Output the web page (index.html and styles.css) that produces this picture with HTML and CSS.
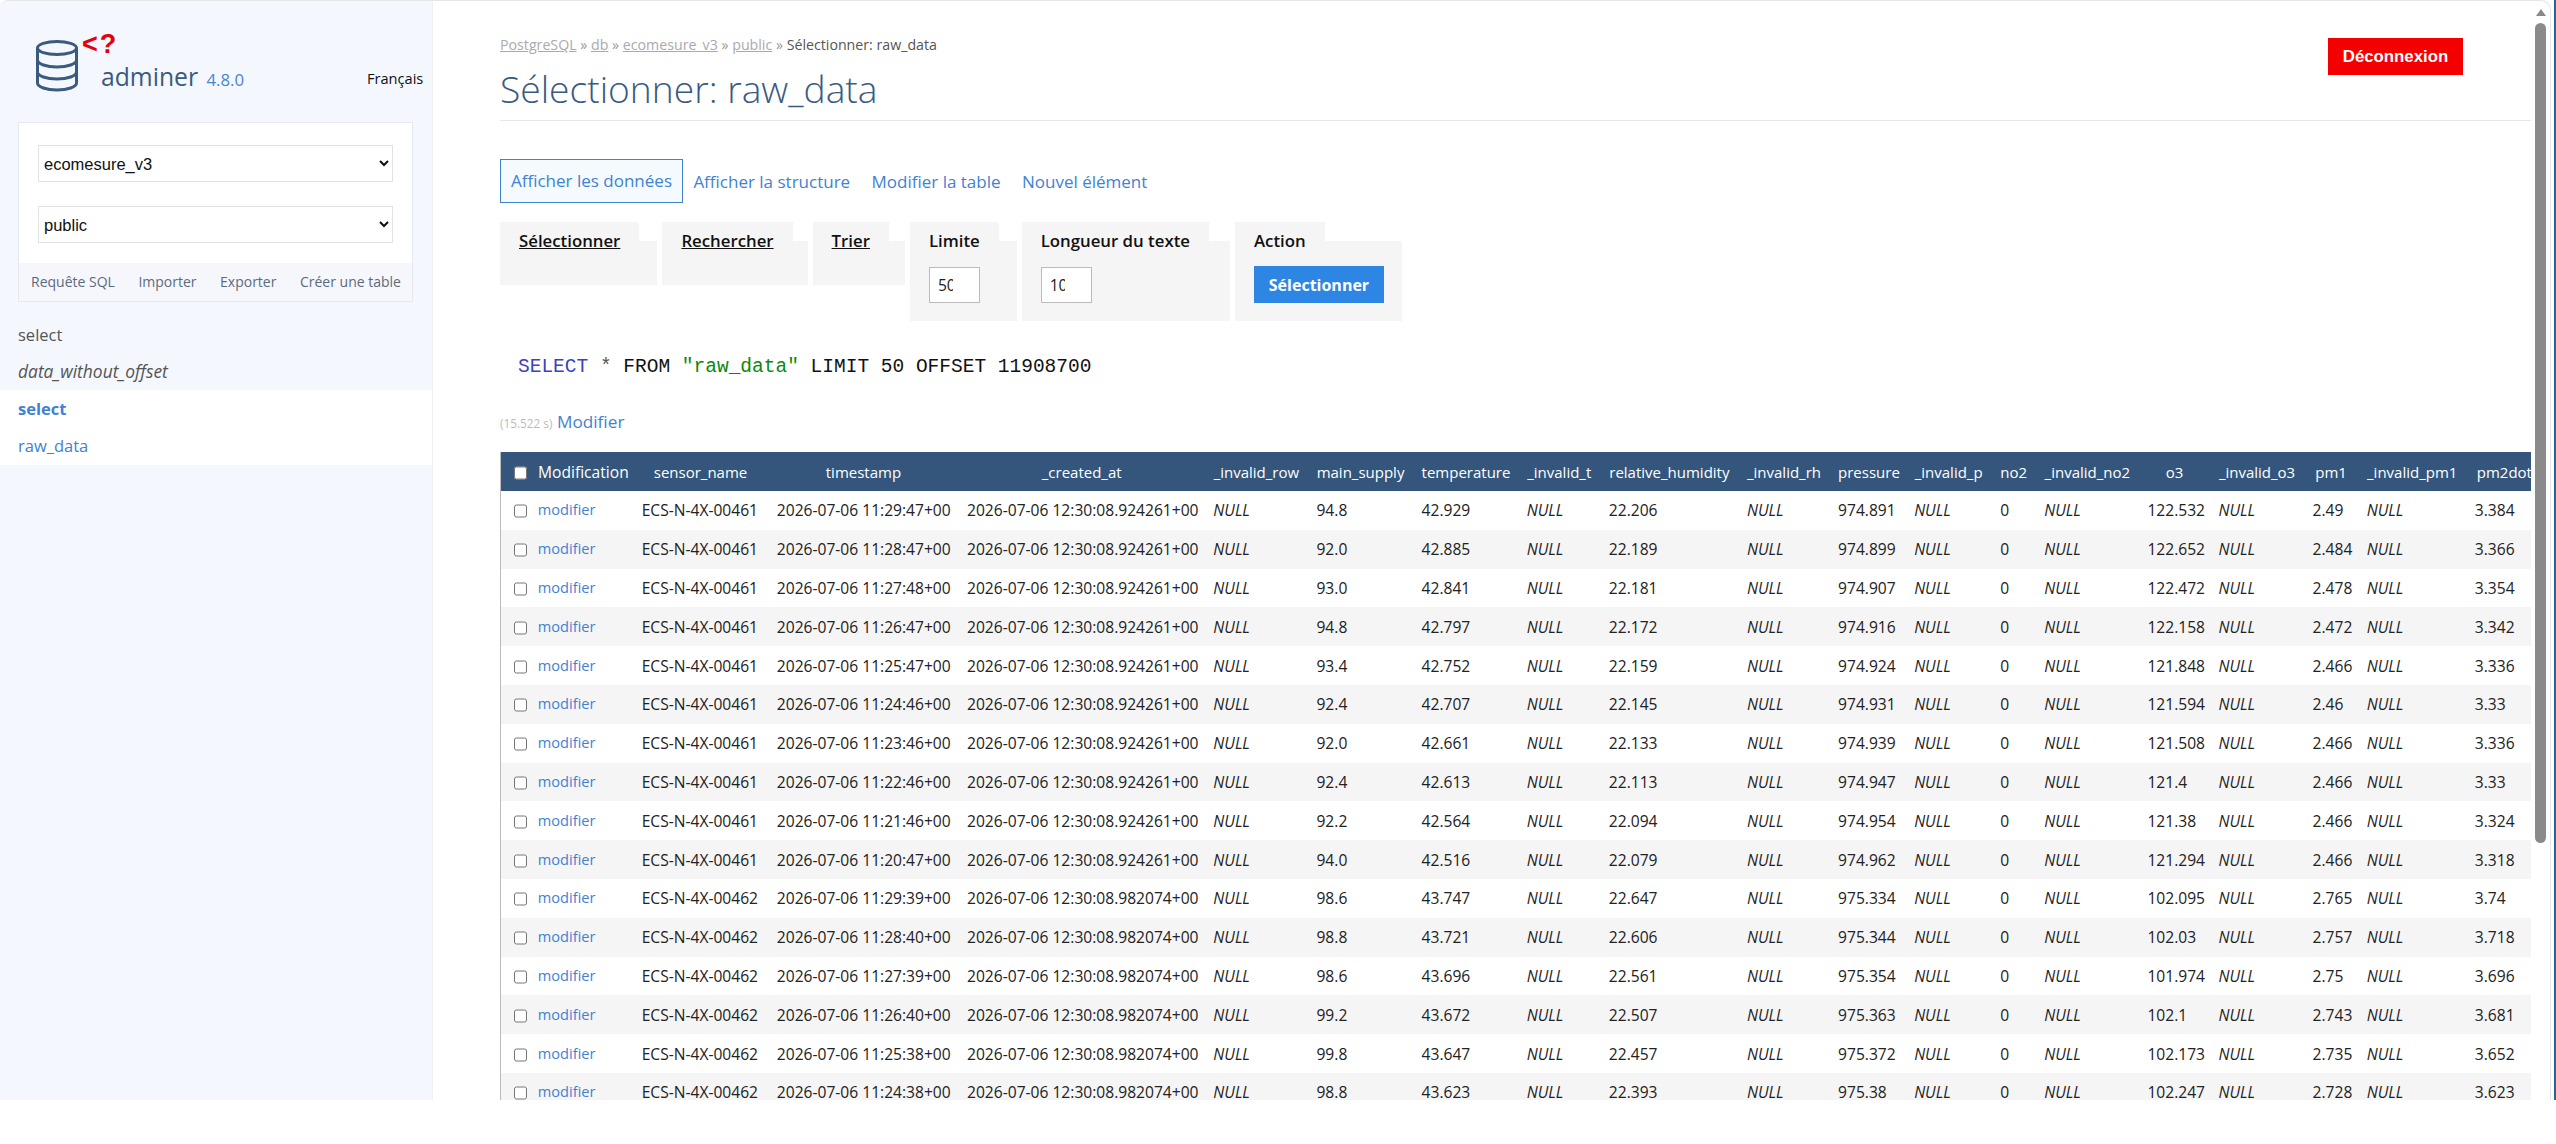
FILE: index.html

```html
<!DOCTYPE html>
<html lang="fr">
<head>
    <meta charset="UTF-8">
    <title>Sélectionner: raw_data - Adminer</title>
    <link rel="stylesheet" href="styles.css">
</head>
<body>
<div class="edge">
<div class="window">
    <aside class="sidebar">
        <div class="brand">
            <svg class="logo" width="84" height="64" viewBox="0 0 84 64">
                <g fill="none" stroke="#3a5a7f" stroke-width="3">
                    <ellipse cx="21" cy="17" rx="19.5" ry="6.5"/>
                    <path d="M1.5 17v35c0 4 9 7 19.5 7s19.5-3 19.5-7V17"/>
                    <path d="M1.5 29c0 4 9 7 19.5 7s19.5-3 19.5-7"/>
                    <path d="M1.5 41c0 4 9 7 19.5 7s19.5-3 19.5-7"/>
                </g>
                <text class="logo-mark" x="46" y="22">&lt;?</text>
            </svg>
            <div class="name">adminer <span class="version">4.8.0</span></div>
            <a class="lang">Français</a>
        </div>
        <div class="db-box">
            <div class="db-selects">
                <select><option>ecomesure_v3</option></select>
                <select><option>public</option></select>
            </div>
            <div class="db-links">
                <a>Requête SQL</a>
                <a>Importer</a>
                <a>Exporter</a>
                <a>Créer une table</a>
            </div>
        </div>
        <ul class="views">
            <li>select</li>
            <li><em>data_without_offset</em></li>
        </ul>
        <ul class="tables">
            <li><b>select</b></li>
            <li>raw_data</li>
        </ul>
    </aside>

    <main class="content">
        <header class="top">
            <div>
                <p class="crumbs"><a>PostgreSQL</a> » <a>db</a> » <a>ecomesure_v3</a> » <a>public</a> » <span>Sélectionner: raw_data</span></p>
                <h1>Sélectionner: raw_data</h1>
            </div>
            <button class="logout">Déconnexion</button>
        </header>

        <nav class="tabs">
            <a class="active">Afficher les données</a>
            <a>Afficher la structure</a>
            <a>Modifier la table</a>
            <a>Nouvel élément</a>
        </nav>

        <form class="filters">
            <fieldset><legend><a>Sélectionner</a></legend></fieldset>
            <fieldset><legend><a>Rechercher</a></legend></fieldset>
            <fieldset><legend><a>Trier</a></legend></fieldset>
            <fieldset><legend>Limite</legend><input type="text" value="50"></fieldset>
            <fieldset><legend>Longueur du texte</legend><input type="text" value="100"></fieldset>
            <fieldset><legend>Action</legend><button type="button" class="go">Sélectionner</button></fieldset>
        </form>

        <p class="sql"><span class="kw">SELECT</span> <span class="star">*</span> FROM <span class="str">"raw_data"</span> LIMIT 50 OFFSET 11908700</p>
        <p class="timing"><span>(15.522 s)</span> <a>Modifier</a></p>

        <div class="scroll">
        <table class="data">
            <colgroup><col><col><col><col><col><col><col><col><col><col><col><col><col><col><col><col><col><col><col></colgroup>
            <thead>
                <tr><th class="mod"><input type="checkbox"> Modification</th><th>sensor_name</th><th>timestamp</th><th>_created_at</th><th>_invalid_row</th><th>main_supply</th><th>temperature</th><th>_invalid_t</th><th>relative_humidity</th><th>_invalid_rh</th><th>pressure</th><th>_invalid_p</th><th>no2</th><th>_invalid_no2</th><th>o3</th><th>_invalid_o3</th><th>pm1</th><th>_invalid_pm1</th><th>pm2dot5</th></tr>
            </thead>
            <tbody>
                <tr><td><input type="checkbox"> <a>modifier</a></td><td>ECS-N-4X-00461</td><td>2026-07-06 11:29:47+00</td><td>2026-07-06 12:30:08.924261+00</td><td><i>NULL</i></td><td>94.8</td><td>42.929</td><td><i>NULL</i></td><td>22.206</td><td><i>NULL</i></td><td>974.891</td><td><i>NULL</i></td><td>0</td><td><i>NULL</i></td><td>122.532</td><td><i>NULL</i></td><td>2.49</td><td><i>NULL</i></td><td>3.384</td></tr>
                <tr><td><input type="checkbox"> <a>modifier</a></td><td>ECS-N-4X-00461</td><td>2026-07-06 11:28:47+00</td><td>2026-07-06 12:30:08.924261+00</td><td><i>NULL</i></td><td>92.0</td><td>42.885</td><td><i>NULL</i></td><td>22.189</td><td><i>NULL</i></td><td>974.899</td><td><i>NULL</i></td><td>0</td><td><i>NULL</i></td><td>122.652</td><td><i>NULL</i></td><td>2.484</td><td><i>NULL</i></td><td>3.366</td></tr>
                <tr><td><input type="checkbox"> <a>modifier</a></td><td>ECS-N-4X-00461</td><td>2026-07-06 11:27:48+00</td><td>2026-07-06 12:30:08.924261+00</td><td><i>NULL</i></td><td>93.0</td><td>42.841</td><td><i>NULL</i></td><td>22.181</td><td><i>NULL</i></td><td>974.907</td><td><i>NULL</i></td><td>0</td><td><i>NULL</i></td><td>122.472</td><td><i>NULL</i></td><td>2.478</td><td><i>NULL</i></td><td>3.354</td></tr>
                <tr><td><input type="checkbox"> <a>modifier</a></td><td>ECS-N-4X-00461</td><td>2026-07-06 11:26:47+00</td><td>2026-07-06 12:30:08.924261+00</td><td><i>NULL</i></td><td>94.8</td><td>42.797</td><td><i>NULL</i></td><td>22.172</td><td><i>NULL</i></td><td>974.916</td><td><i>NULL</i></td><td>0</td><td><i>NULL</i></td><td>122.158</td><td><i>NULL</i></td><td>2.472</td><td><i>NULL</i></td><td>3.342</td></tr>
                <tr><td><input type="checkbox"> <a>modifier</a></td><td>ECS-N-4X-00461</td><td>2026-07-06 11:25:47+00</td><td>2026-07-06 12:30:08.924261+00</td><td><i>NULL</i></td><td>93.4</td><td>42.752</td><td><i>NULL</i></td><td>22.159</td><td><i>NULL</i></td><td>974.924</td><td><i>NULL</i></td><td>0</td><td><i>NULL</i></td><td>121.848</td><td><i>NULL</i></td><td>2.466</td><td><i>NULL</i></td><td>3.336</td></tr>
                <tr><td><input type="checkbox"> <a>modifier</a></td><td>ECS-N-4X-00461</td><td>2026-07-06 11:24:46+00</td><td>2026-07-06 12:30:08.924261+00</td><td><i>NULL</i></td><td>92.4</td><td>42.707</td><td><i>NULL</i></td><td>22.145</td><td><i>NULL</i></td><td>974.931</td><td><i>NULL</i></td><td>0</td><td><i>NULL</i></td><td>121.594</td><td><i>NULL</i></td><td>2.46</td><td><i>NULL</i></td><td>3.33</td></tr>
                <tr><td><input type="checkbox"> <a>modifier</a></td><td>ECS-N-4X-00461</td><td>2026-07-06 11:23:46+00</td><td>2026-07-06 12:30:08.924261+00</td><td><i>NULL</i></td><td>92.0</td><td>42.661</td><td><i>NULL</i></td><td>22.133</td><td><i>NULL</i></td><td>974.939</td><td><i>NULL</i></td><td>0</td><td><i>NULL</i></td><td>121.508</td><td><i>NULL</i></td><td>2.466</td><td><i>NULL</i></td><td>3.336</td></tr>
                <tr><td><input type="checkbox"> <a>modifier</a></td><td>ECS-N-4X-00461</td><td>2026-07-06 11:22:46+00</td><td>2026-07-06 12:30:08.924261+00</td><td><i>NULL</i></td><td>92.4</td><td>42.613</td><td><i>NULL</i></td><td>22.113</td><td><i>NULL</i></td><td>974.947</td><td><i>NULL</i></td><td>0</td><td><i>NULL</i></td><td>121.4</td><td><i>NULL</i></td><td>2.466</td><td><i>NULL</i></td><td>3.33</td></tr>
                <tr><td><input type="checkbox"> <a>modifier</a></td><td>ECS-N-4X-00461</td><td>2026-07-06 11:21:46+00</td><td>2026-07-06 12:30:08.924261+00</td><td><i>NULL</i></td><td>92.2</td><td>42.564</td><td><i>NULL</i></td><td>22.094</td><td><i>NULL</i></td><td>974.954</td><td><i>NULL</i></td><td>0</td><td><i>NULL</i></td><td>121.38</td><td><i>NULL</i></td><td>2.466</td><td><i>NULL</i></td><td>3.324</td></tr>
                <tr><td><input type="checkbox"> <a>modifier</a></td><td>ECS-N-4X-00461</td><td>2026-07-06 11:20:47+00</td><td>2026-07-06 12:30:08.924261+00</td><td><i>NULL</i></td><td>94.0</td><td>42.516</td><td><i>NULL</i></td><td>22.079</td><td><i>NULL</i></td><td>974.962</td><td><i>NULL</i></td><td>0</td><td><i>NULL</i></td><td>121.294</td><td><i>NULL</i></td><td>2.466</td><td><i>NULL</i></td><td>3.318</td></tr>
                <tr><td><input type="checkbox"> <a>modifier</a></td><td>ECS-N-4X-00462</td><td>2026-07-06 11:29:39+00</td><td>2026-07-06 12:30:08.982074+00</td><td><i>NULL</i></td><td>98.6</td><td>43.747</td><td><i>NULL</i></td><td>22.647</td><td><i>NULL</i></td><td>975.334</td><td><i>NULL</i></td><td>0</td><td><i>NULL</i></td><td>102.095</td><td><i>NULL</i></td><td>2.765</td><td><i>NULL</i></td><td>3.74</td></tr>
                <tr><td><input type="checkbox"> <a>modifier</a></td><td>ECS-N-4X-00462</td><td>2026-07-06 11:28:40+00</td><td>2026-07-06 12:30:08.982074+00</td><td><i>NULL</i></td><td>98.8</td><td>43.721</td><td><i>NULL</i></td><td>22.606</td><td><i>NULL</i></td><td>975.344</td><td><i>NULL</i></td><td>0</td><td><i>NULL</i></td><td>102.03</td><td><i>NULL</i></td><td>2.757</td><td><i>NULL</i></td><td>3.718</td></tr>
                <tr><td><input type="checkbox"> <a>modifier</a></td><td>ECS-N-4X-00462</td><td>2026-07-06 11:27:39+00</td><td>2026-07-06 12:30:08.982074+00</td><td><i>NULL</i></td><td>98.6</td><td>43.696</td><td><i>NULL</i></td><td>22.561</td><td><i>NULL</i></td><td>975.354</td><td><i>NULL</i></td><td>0</td><td><i>NULL</i></td><td>101.974</td><td><i>NULL</i></td><td>2.75</td><td><i>NULL</i></td><td>3.696</td></tr>
                <tr><td><input type="checkbox"> <a>modifier</a></td><td>ECS-N-4X-00462</td><td>2026-07-06 11:26:40+00</td><td>2026-07-06 12:30:08.982074+00</td><td><i>NULL</i></td><td>99.2</td><td>43.672</td><td><i>NULL</i></td><td>22.507</td><td><i>NULL</i></td><td>975.363</td><td><i>NULL</i></td><td>0</td><td><i>NULL</i></td><td>102.1</td><td><i>NULL</i></td><td>2.743</td><td><i>NULL</i></td><td>3.681</td></tr>
                <tr><td><input type="checkbox"> <a>modifier</a></td><td>ECS-N-4X-00462</td><td>2026-07-06 11:25:38+00</td><td>2026-07-06 12:30:08.982074+00</td><td><i>NULL</i></td><td>99.8</td><td>43.647</td><td><i>NULL</i></td><td>22.457</td><td><i>NULL</i></td><td>975.372</td><td><i>NULL</i></td><td>0</td><td><i>NULL</i></td><td>102.173</td><td><i>NULL</i></td><td>2.735</td><td><i>NULL</i></td><td>3.652</td></tr>
                <tr><td><input type="checkbox"> <a>modifier</a></td><td>ECS-N-4X-00462</td><td>2026-07-06 11:24:38+00</td><td>2026-07-06 12:30:08.982074+00</td><td><i>NULL</i></td><td>98.8</td><td>43.623</td><td><i>NULL</i></td><td>22.393</td><td><i>NULL</i></td><td>975.38</td><td><i>NULL</i></td><td>0</td><td><i>NULL</i></td><td>102.247</td><td><i>NULL</i></td><td>2.728</td><td><i>NULL</i></td><td>3.623</td></tr>
            </tbody>
        </table>
        </div>
    </main>

    <div class="scrollbar">
        <div class="arrow"></div>
        <div class="thumb"></div>
    </div>
</div>
</div>
</body>
</html>
```

FILE: styles.css

```css
* {
    box-sizing: border-box;
}

body {
    margin: 0;
    background: #fff;
    color: #222;
    font-family: "Open Sans", "Noto Sans", sans-serif;
    font-size: 15.6px;
}

p, h1, ul {
    margin: 0;
    padding: 0;
}

ul {
    list-style: none;
}

/* frame of the app window */
.edge {
    height: 1100px;
    border-right: 2px solid #1a6a9e;
}

.window {
    display: flex;
    height: 1100px;
    margin-right: 3px;
    overflow: hidden;
    border-top: 1px solid #e6e6e6;
    border-right: 1px solid #e6e6e6;
    border-radius: 8px 10px 0 0;
}

/* sidebar */
.sidebar {
    flex: none;
    width: 433px;
    background: #f4f7fd;
    border-right: 1px solid #eef1f6;
}

.brand {
    display: flex;
    align-items: flex-start;
    height: 121px;
    padding: 30px 0 0 36px;
}

.logo {
    flex: none;
    margin-right: -19px;
    overflow: visible;
}

.logo-mark {
    font-family: "Liberation Sans", sans-serif;
    font-size: 27px;
    font-weight: bold;
    letter-spacing: 2px;
    fill: #e3000f;
}

.name {
    flex: none;
    width: 262px;
    margin-top: 27px;
    color: #3a5a7f;
    font-size: 24.7px;
    line-height: 38px;
}

.version {
    margin-left: 2px;
    color: #4a85cf;
    font-size: 16.8px;
}

.lang {
    margin-top: 37px;
    margin-left: 4px;
    color: #111;
    font-size: 14.6px;
}

.db-box {
    width: 395px;
    height: 180px;
    margin-left: 18px;
    background: #fff;
    border: 1px solid #e6e9f0;
}

.db-selects {
    display: flex;
    flex-direction: column;
    gap: 24px;
    height: 140px;
    padding: 22px 19px 0;
}

select {
    width: 100%;
    height: 37px;
    padding: 0 0 0 1px;
    background: #fff;
    color: #111;
    border: 1px solid #e2e2e2;
    font-family: "Liberation Sans", sans-serif;
    font-size: 16.5px;
}

.db-links {
    display: flex;
    justify-content: space-between;
    height: 38px;
    padding: 0 11px 0 12px;
    background: #f5f7fc;
    color: #5c6b7c;
    font-size: 14px;
    line-height: 38px;
}

.views {
    padding: 14px 0 0 18px;
    color: #555;
    font-size: 16.5px;
}

.views li {
    height: 37px;
    line-height: 37px;
}

.views em {
    font-size: 17.4px;
}

.tables {
    padding: 0 0 0 18px;
    height: 75px;
    background: #fff;
    color: #3f82d3;
    font-size: 16.5px;
    line-height: 37px;
}

/* main column */
.content {
    flex: 1;
    min-width: 0;
    padding-left: 67px;
}

.top {
    display: flex;
    justify-content: space-between;
    align-items: flex-start;
    height: 120px;
    border-bottom: 1px solid #e8e8e8;
}

.crumbs {
    margin-top: 34px;
    color: #999;
    font-size: 14.2px;
    line-height: 20px;
}

.crumbs a {
    color: #aaa;
    text-decoration: underline;
}

.crumbs span {
    color: #555;
}

h1 {
    margin-top: 11px;
    color: #3a5a7f;
    font-size: 37.2px;
    font-weight: 300;
    line-height: 46px;
}

.logout {
    width: 135px;
    height: 37px;
    margin: 37px 68px 0 0;
    padding: 0;
    background: #f50000;
    color: #fff;
    border: 0;
    font-family: "Liberation Sans", sans-serif;
    font-size: 16.8px;
    font-weight: bold;
}

.tabs {
    display: flex;
    gap: 21.4px;
    align-items: center;
    height: 44px;
    margin-top: 38px;
    color: #3f82d3;
    font-size: 17px;
}

.tabs a:first-child {
    margin-right: -11px;
}

.tabs .active {
    padding: 0 10px;
    line-height: 42px;
    background: #f5fafe;
    border: 1px solid #3d85c6;
}

/* filter boxes */
.filters {
    display: flex;
    gap: 5px;
    align-items: flex-start;
    margin-top: 19px;
}

fieldset {
    margin: 0;
    min-width: 0;
    padding: 7px 18px 18px 19px;
    background: #f5f5f5;
    border: 0;
}

fieldset:nth-child(2) {
    padding-right: 15px;
}

fieldset:nth-child(3) {
    padding-right: 16px;
}

fieldset:nth-child(5) {
    padding-right: 21px;
}

legend {
    margin-left: -19px;
    padding: 0 19px;
    background: #f5f5f5;
    color: #111;
    font-size: 16.8px;
    font-weight: 600;
    line-height: 38px;
}

legend a {
    text-decoration: underline;
}

fieldset input {
    display: block;
    width: 51px;
    height: 36px;
    padding: 0 26px 0 8px;
    background: #fff;
    color: #222;
    border: 1px solid #bbb;
    font-family: "Open Sans", sans-serif;
    font-size: 15.6px;
}

.go {
    display: block;
    width: 130px;
    height: 37px;
    margin-top: -1px;
    padding: 0;
    background: #2e86e4;
    color: #fff;
    border: 0;
    font-family: "Open Sans", sans-serif;
    font-size: 16px;
    font-weight: 700;
}

.sql {
    margin-top: 30px;
    padding-left: 18px;
    color: #111;
    font-family: "Liberation Mono", monospace;
    font-size: 19.5px;
    line-height: 32px;
}

.sql .kw {
    color: #4040c0;
}

.sql .star {
    color: #555;
}

.sql .str {
    color: #0a8a0a;
}

.timing {
    margin-top: 27px;
    color: #3f82d3;
    font-size: 17.2px;
    line-height: 24px;
}

.timing span {
    color: #bbb;
    font-size: 11.8px;
}

/* result table */
.scroll {
    margin-top: 17px;
    overflow: hidden;
}

.data {
    width: 2051px;
    table-layout: fixed;
    border-collapse: collapse;
    border-left: 1px solid #bbb;
}

.data col:nth-child(1) { width: 132.5px; }
.data col:nth-child(2) { width: 135px; }
.data col:nth-child(3) { width: 190px; }
.data col:nth-child(4) { width: 246px; }
.data col:nth-child(5) { width: 103px; }
.data col:nth-child(6) { width: 105px; }
.data col:nth-child(7) { width: 105px; }
.data col:nth-child(8) { width: 82px; }
.data col:nth-child(9) { width: 138px; }
.data col:nth-child(10) { width: 91px; }
.data col:nth-child(11) { width: 76px; }
.data col:nth-child(12) { width: 86px; }
.data col:nth-child(13) { width: 44px; }
.data col:nth-child(14) { width: 103px; }
.data col:nth-child(15) { width: 71px; }
.data col:nth-child(16) { width: 94px; }
.data col:nth-child(17) { width: 54px; }
.data col:nth-child(18) { width: 108px; }
.data col:nth-child(19) { width: 84.5px; }

.data th {
    height: 39px;
    padding: 0 8.5px;
    background: #34567c;
    color: #fff;
    font-size: 15px;
    font-weight: 400;
    text-align: center;
    white-space: nowrap;
    overflow: hidden;
}

.data th.mod {
    padding-left: 13px;
    font-size: 15.6px;
    text-align: left;
}

.data td {
    height: 38.8px;
    padding: 0 8.5px;
    white-space: nowrap;
    overflow: hidden;
}

.data td:first-child {
    padding-left: 13px;
    font-size: 14.6px;
}

.data tbody tr:nth-child(even) {
    background: #f5f5f5;
}

.data input {
    width: 13px;
    height: 14px;
    margin: 0 7px 0 0;
    vertical-align: -2px;
}

.data a {
    color: #3f82d3;
    position: relative;
    top: -1px;
}

/* scrollbar drawn at the right of the page */
.scrollbar {
    flex: none;
    width: 19px;
    padding: 8px 4px 0 4px;
}

.arrow {
    width: 0;
    height: 0;
    margin: 0 auto 7px;
    border-left: 5px solid transparent;
    border-right: 5px solid transparent;
    border-bottom: 7px solid #8a8a8a;
}

.thumb {
    width: 11px;
    height: 820px;
    background: #8a8a8a;
    border-radius: 6px;
}
```
